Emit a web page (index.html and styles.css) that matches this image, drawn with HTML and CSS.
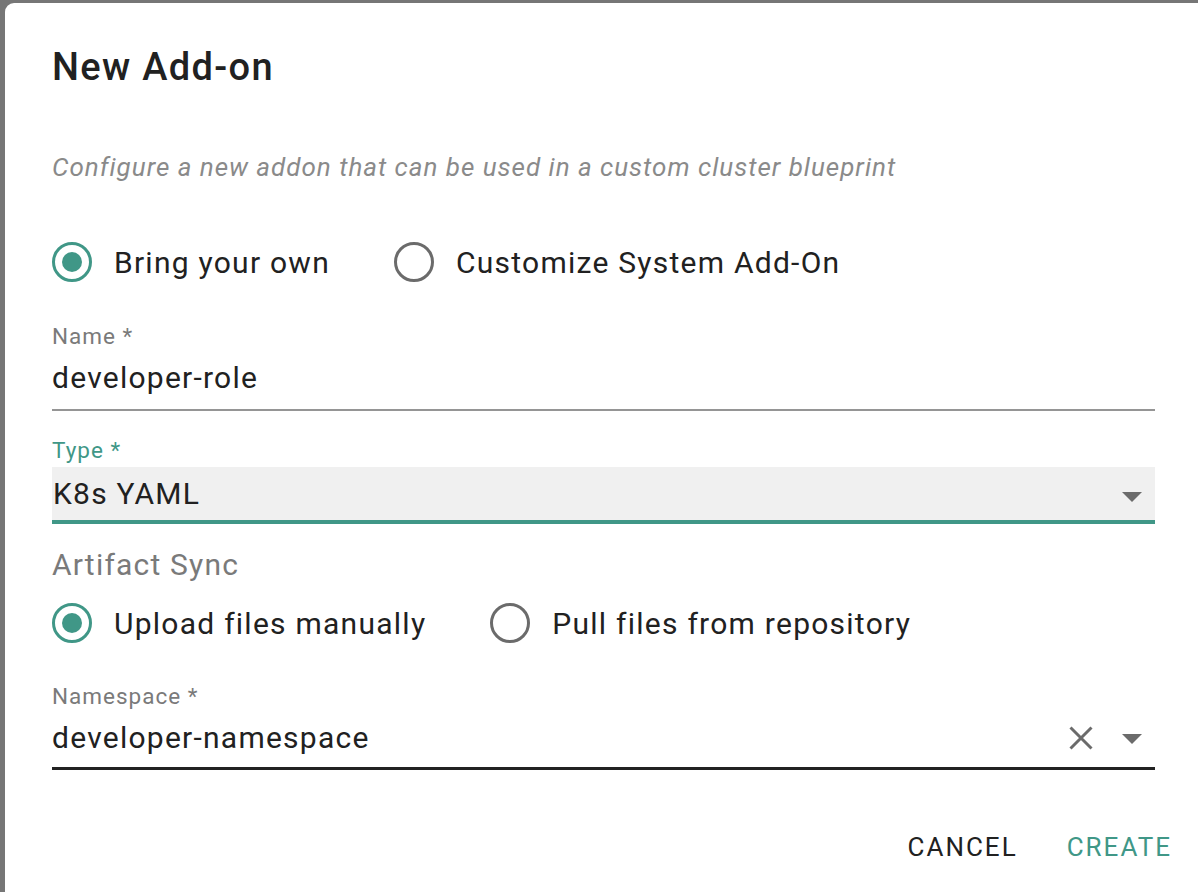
FILE: index.html
```html
<!DOCTYPE html>
<html>
<head>
<meta charset="utf-8">
<link rel="stylesheet" href="styles.css">
</head>
<body>
<div class="dialog">
  <h1 class="title">New Add-on</h1>
  <p class="desc">Configure a new addon that can be used in a custom cluster blueprint</p>

  <div class="radios first">
    <label class="radio"><span class="circle checked"></span><span>Bring your own</span></label>
    <label class="radio"><span class="circle"></span><span>Customize System Add-On</span></label>
  </div>

  <div class="field">
    <div class="label">Name *</div>
    <div class="input plain">developer-role</div>
  </div>

  <div class="field type">
    <div class="label teal">Type *</div>
    <div class="input filled">
      <span class="value">K8s YAML</span>
      <svg class="caret" width="20" height="10" viewBox="0 0 20 10"><path d="M0 0 L20 0 L10 10 Z" fill="#6b6b6b"/></svg>
    </div>
  </div>

  <div class="section">Artifact Sync</div>
  <div class="radios second">
    <label class="radio"><span class="circle checked"></span><span>Upload files manually</span></label>
    <label class="radio"><span class="circle"></span><span>Pull files from repository</span></label>
  </div>

  <div class="field ns">
    <div class="label">Namespace *</div>
    <div class="input dark">
      <span class="value">developer-namespace</span>
      <svg class="clear" width="24" height="24" viewBox="0 0 24 24"><path d="M1.5 1.5 L22.5 22.5 M22.5 1.5 L1.5 22.5" stroke="#6b6b6b" stroke-width="3" fill="none"/></svg>
      <svg class="caret" width="20" height="10" viewBox="0 0 20 10"><path d="M0 0 L20 0 L10 10 Z" fill="#6b6b6b"/></svg>
    </div>
  </div>

  <div class="actions">
    <button class="btn cancel">CANCEL</button>
    <button class="btn create">CREATE</button>
  </div>
</div>
</body>
</html>
```

FILE: styles.css
```css
html, body {
  margin: 0;
  padding: 0;
  background: #767676;
  overflow: hidden;
  height: 892px;
}
body {
  font-family: Roboto, "Liberation Sans", sans-serif;
  color: #212121;
}
.dialog {
  margin: 3px 0 0 5px;
  width: 1193px;
  height: 889px;
  box-sizing: border-box;
  background: #fff;
  border-radius: 9px 0 0 0;
  padding: 41px 43px 0 47px;
}
.title {
  margin: 0;
  font-size: 38px;
  font-weight: 500;
  line-height: 46px;
  letter-spacing: 1.33px;
  color: #212121;
}
.desc {
  margin: 59px 0 0 0;
  font-size: 26px;
  font-style: italic;
  line-height: 36px;
  letter-spacing: 0.99px;
  color: #8a8a8a;
}
.radios {
  display: flex;
  gap: 64px;
  height: 48px;
  align-items: center;
}
.radios.first { margin-top: 53px; }
.radios.second { margin-top: 16px; }
.radio {
  display: flex;
  align-items: center;
  gap: 22px;
  font-size: 30px;
  letter-spacing: 1.25px;
  color: #212121;
}
.circle {
  width: 40px;
  height: 40px;
  box-sizing: border-box;
  border: 3.5px solid #6b6b6b;
  border-radius: 50%;
  display: flex;
  align-items: center;
  justify-content: center;
}
.circle.checked { border-color: #409787; }
.circle.checked::after {
  content: "";
  width: 20px;
  height: 20px;
  border-radius: 50%;
  background: #409787;
}
.field { margin-top: 36px; }
.field.type { margin-top: 25px; }
.label {
  font-size: 22.5px;
  line-height: 28px;
  letter-spacing: 1px;
  color: #7a7a7a;
}
.label.teal { color: #409787; }
.input {
  font-size: 30px;
  line-height: 36px;
  letter-spacing: 1.25px;
  display: flex;
  align-items: center;
}
.input.plain {
  margin-top: 10px;
  padding-bottom: 13px;
  border-bottom: 2px solid #959595;
}
.input.filled {
  margin-top: 3px;
  background: #f0f0f0;
  height: 53px;
  padding: 0 0 0 1px;
  border-bottom: 4px solid #409787;
}
.value { flex: 1; }
.caret { margin-right: 13px; }
.input.filled .caret { margin-top: 6px; }
.clear { margin-right: 29px; }
.section {
  margin-top: 23px;
  font-size: 30px;
  line-height: 36px;
  letter-spacing: 1.2px;
  color: #7a7a7a;
}
.field.ns { margin-top: 35px; }
.input.dark {
  margin-top: 10px;
  padding-bottom: 11px;
  border-bottom: 3px solid #222;
}
.input.dark .caret { margin-top: 2px; }
.actions {
  display: flex;
  justify-content: flex-end;
  margin: 59px -17px 0 0;
  gap: 49px;
}
.btn {
  font-family: Roboto, "Liberation Sans", sans-serif;
  background: none;
  border: none;
  padding: 0;
  font-size: 26px;
  line-height: 36px;
  font-weight: 400;
  letter-spacing: 2px;
  cursor: pointer;
}
.cancel { color: #212121; }
.create { color: #409787; }
```
